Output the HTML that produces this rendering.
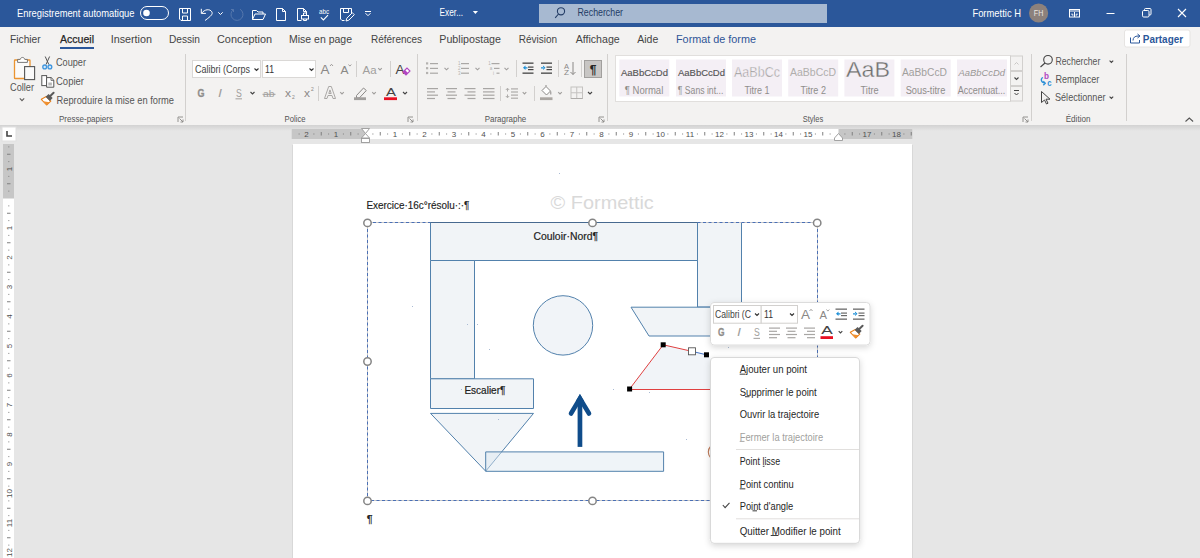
<!DOCTYPE html>
<html><head><meta charset="utf-8"><title>Word</title>
<style>
*{margin:0;padding:0}
html,body{width:1200px;height:558px;overflow:hidden;background:#e6e6e6}
svg{display:block;font-family:"Liberation Sans", sans-serif}
</style></head><body>
<svg width="1200" height="558" viewBox="0 0 1200 558">
<defs>
<linearGradient id="sh" x1="0" y1="0" x2="0" y2="1"><stop offset="0" stop-color="#d2d2d2"/><stop offset="1" stop-color="#e6e6e6"/></linearGradient>
<filter id="ds" x="-15%" y="-15%" width="130%" height="140%"><feDropShadow dx="0" dy="2" stdDeviation="3" flood-color="#000" flood-opacity="0.16"/></filter>
</defs>
<rect x="0" y="0" width="1200" height="558" fill="#e6e6e6"/><rect x="0" y="0" width="1200" height="27" fill="#2b579a"/><rect x="0" y="27" width="1200" height="98" fill="#f3f2f1"/><rect x="0" y="125" width="1200" height="6" fill="url(#sh)"/><text x="17" y="16.6" font-size="10.3" fill="#ffffff" text-anchor="start" font-weight="normal" font-style="normal" textLength="117.5" lengthAdjust="spacingAndGlyphs">Enregistrement automatique</text><rect x="140.5" y="6.5" width="28" height="13" rx="6.5" fill="none" stroke="#fff" stroke-width="1"/><circle cx="146.5" cy="13" r="3.3" fill="#fff"/><g fill="none" stroke="#fff" stroke-width="1"><path d="M179.5 8.5h11v12h-9.5l-1.5-1.5z"/><path d="M182.5 8.5v4.5h5v-4.5"/><path d="M182.5 20.5v-4.5h5v4.5"/></g><g fill="none" stroke="#fff" stroke-width="1"><path d="M201.3 8.8v4.6h4.6"/><path d="M201.6 13.2C204.5 9.2,210 8.6,211.8 11.8C213 14,211.5 15.8,205 20.5"/></g><path d="M218.3 12.3l2.2 2.2l2.2-2.2" fill="none" stroke="#fff" stroke-width="1"/><path d="M233.5 9.5A6 6 0 1 0 240 9.2 M233.5 9.5h-2.5 M233.5 9.5v2.5" fill="none" stroke="#5577ad" stroke-width="1"/><g fill="none" stroke="#fff" stroke-width="1"><path d="M252.5 19.5v-9h4l1.5 1.5h5v2"/><path d="M252.5 19.5l2.5-5.5h10.5l-2.5 5.5z"/></g><path d="M276.5 8.5h6l3 3v9h-9z M282.5 8.5v3h3" fill="none" stroke="#fff" stroke-width="1"/><g fill="none" stroke="#fff" stroke-width="1"><path d="M297.5 20.5v-12h6l3 3v1.5"/><path d="M303.5 8.5v3h3"/><path d="M301.5 20.5h-4"/><rect x="301.5" y="15.5" width="7" height="3.5"/><path d="M303.5 15.5v-2.5h3v2.5 M303.5 19v1.5h3v-1.5"/></g><text x="324.1" y="13.8" font-size="7" fill="#ffffff" text-anchor="middle" font-weight="normal" font-style="normal" textLength="10" lengthAdjust="spacingAndGlyphs">abc</text><path d="M320.8 17.3l2.6 2.6l4.6-4.8" fill="none" stroke="#fff" stroke-width="1.1"/><g fill="none" stroke="#fff" stroke-width="1"><path d="M344.5 20.5h-2.5l-1.5-1.5v-10.5h11v5"/><path d="M343.5 8.5v4h5v-4"/><path d="M346 21l0.8-2.8l5.5-5.5l2 2l-5.5 5.5z"/></g><path d="M365 11.5h6" stroke="#fff" stroke-width="1"/><path d="M365.5 13.2l2.5 2.5l2.5-2.5" fill="none" stroke="#fff" stroke-width="1"/><text x="439.6" y="15.8" font-size="10" fill="#ffffff" text-anchor="start" font-weight="normal" font-style="normal" textLength="23.5" lengthAdjust="spacingAndGlyphs">Exer...</text><path d="M472.8 11h5.2l-2.6 3z" fill="#fff"/><rect x="539" y="4" width="288" height="19" fill="#a7b9d1"/><g fill="none" stroke="#243d66" stroke-width="1.1"><circle cx="561" cy="11.3" r="3.6"/><path d="M558.5 14l-3.3 3.8"/></g><text x="577.5" y="16.4" font-size="10" fill="#233c66" text-anchor="start" font-weight="normal" font-style="normal" textLength="45.5" lengthAdjust="spacingAndGlyphs">Rechercher</text><text x="972.4" y="17" font-size="10.2" fill="#ffffff" text-anchor="start" font-weight="normal" font-style="normal" textLength="48.6" lengthAdjust="spacingAndGlyphs">Formettic H</text><circle cx="1038.6" cy="13" r="9.6" fill="#8c817c"/><text x="1038.6" y="16.3" font-size="8.5" fill="#ebe6e3" text-anchor="middle" font-weight="normal" font-style="normal" textLength="9.5" lengthAdjust="spacingAndGlyphs">FH</text><g fill="none" stroke="#fff" stroke-width="1"><rect x="1069.5" y="9.5" width="10" height="7.5"/><path d="M1069.5 11h10"/><path d="M1074.5 12v5 M1072 13.5v1.5h1.5 M1077 13.5v1.5h-1.5"/></g><path d="M1106.5 13.5h8" stroke="#fff" stroke-width="1"/><g fill="none" stroke="#fff" stroke-width="1"><rect x="1142.5" y="10.5" width="6.5" height="6.5" rx="1.2"/><path d="M1144.5 10.5v-1a1 1 0 0 1 1-1h4.5a1 1 0 0 1 1 1v4.5a1 1 0 0 1 -1 1h-1"/></g><path d="M1178 9l8 8 M1186 9l-8 8" stroke="#fff" stroke-width="1.1"/><text x="10" y="42.6" font-size="11" fill="#444444" text-anchor="start" font-weight="normal" font-style="normal" textLength="30.7" lengthAdjust="spacingAndGlyphs">Fichier</text><text x="60" y="42.6" font-size="11" fill="#262626" text-anchor="start" font-weight="normal" font-style="normal" textLength="34" lengthAdjust="spacingAndGlyphs" stroke="#262626" stroke-width="0.25">Accueil</text><text x="110.7" y="42.6" font-size="11" fill="#444444" text-anchor="start" font-weight="normal" font-style="normal" textLength="41.3" lengthAdjust="spacingAndGlyphs">Insertion</text><text x="169" y="42.6" font-size="11" fill="#444444" text-anchor="start" font-weight="normal" font-style="normal" textLength="31" lengthAdjust="spacingAndGlyphs">Dessin</text><text x="217" y="42.6" font-size="11" fill="#444444" text-anchor="start" font-weight="normal" font-style="normal" textLength="55" lengthAdjust="spacingAndGlyphs">Conception</text><text x="289" y="42.6" font-size="11" fill="#444444" text-anchor="start" font-weight="normal" font-style="normal" textLength="63" lengthAdjust="spacingAndGlyphs">Mise en page</text><text x="371" y="42.6" font-size="11" fill="#444444" text-anchor="start" font-weight="normal" font-style="normal" textLength="51" lengthAdjust="spacingAndGlyphs">Références</text><text x="439.3" y="42.6" font-size="11" fill="#444444" text-anchor="start" font-weight="normal" font-style="normal" textLength="61.7" lengthAdjust="spacingAndGlyphs">Publipostage</text><text x="518.7" y="42.6" font-size="11" fill="#444444" text-anchor="start" font-weight="normal" font-style="normal" textLength="38.3" lengthAdjust="spacingAndGlyphs">Révision</text><text x="575.7" y="42.6" font-size="11" fill="#444444" text-anchor="start" font-weight="normal" font-style="normal" textLength="44" lengthAdjust="spacingAndGlyphs">Affichage</text><text x="637.3" y="42.6" font-size="11" fill="#444444" text-anchor="start" font-weight="normal" font-style="normal" textLength="21" lengthAdjust="spacingAndGlyphs">Aide</text><text x="676" y="42.6" font-size="11" fill="#2f5597" text-anchor="start" font-weight="normal" font-style="normal" textLength="80" lengthAdjust="spacingAndGlyphs">Format de forme</text><rect x="60" y="47" width="34" height="2" fill="#2b579a"/><rect x="1124.5" y="30" width="65.5" height="17" rx="2" fill="#fff" stroke="#e6e4e2" stroke-width="1"/><g fill="none" stroke="#2b579a" stroke-width="1"><path d="M1130.5 37.5v5.5h9v-3"/><path d="M1133 40.5c0-3 2-4.5 5-4.5h1.5 M1137.5 34l2.5 2l-2.5 2"/></g><text x="1142.8" y="42.8" font-size="11" fill="#2b579a" text-anchor="start" font-weight="bold" font-style="normal" textLength="40.3" lengthAdjust="spacingAndGlyphs">Partager</text><g><rect x="14.5" y="60" width="15.5" height="18.5" rx="0.6" fill="#fbfaf9" stroke="#eb9430" stroke-width="1.3"/><path d="M17.6 62.4v-3h2.6c0.6-2.6 4-2.6 4.6 0h2.6v3z" fill="#fff" stroke="#6a6a6a" stroke-width="0.9"/><rect x="24.6" y="66.6" width="10" height="13" fill="#fafafa" stroke="#555" stroke-width="1.1"/></g><text x="10" y="91" font-size="10.5" fill="#555555" text-anchor="start" font-weight="normal" font-style="normal" textLength="24" lengthAdjust="spacingAndGlyphs">Coller</text><path d="M19.8 98.4l2.2 2.2l2.2 -2.2" fill="none" stroke="#605e5c" stroke-width="1.1"/><path d="M45.2 56.5L48.8 64.5 M49.6 56.5L46 64.5" fill="none" stroke="#555" stroke-width="1"/><circle cx="44.7" cy="66.9" r="1.9" fill="#d4e8f8" stroke="#3f95dd" stroke-width="1.3"/><circle cx="49.9" cy="66.9" r="1.9" fill="#d4e8f8" stroke="#3f95dd" stroke-width="1.3"/><text x="56" y="66.3" font-size="10.3" fill="#555555" text-anchor="start" font-weight="normal" font-style="normal" textLength="30" lengthAdjust="spacingAndGlyphs">Couper</text><rect x="41.8" y="75.6" width="4.8" height="10" fill="#fff" stroke="#555" stroke-width="1"/><path d="M46.6 77.6h4.6l2.6 2.6v7h-7.2z" fill="#fff" stroke="#555" stroke-width="1"/><path d="M51 77.6v2.8h2.8" fill="none" stroke="#555" stroke-width="0.8"/><rect x="48.3" y="82.5" width="3.6" height="3" fill="#b8b8b8"/><text x="56" y="85" font-size="10.3" fill="#555555" text-anchor="start" font-weight="normal" font-style="normal" textLength="28" lengthAdjust="spacingAndGlyphs">Copier</text><g transform="translate(0 0)"><path d="M41.3 99.3L46.3 96.6L50.8 101.1L46.6 105Z" fill="#fff" stroke="#e8801a" stroke-width="1.1" stroke-linejoin="round"/><path d="M43.2 101.2L49.6 102.2L46.6 105Z" fill="#f09030"/><path d="M45.6 96.8L48.6 94L52.6 98L49.8 101Z" fill="#5a5a5a"/><path d="M50 96.2L53.6 92.8" stroke="#5a5a5a" stroke-width="2" stroke-linecap="round"/></g><text x="56.5" y="104" font-size="10.3" fill="#555555" text-anchor="start" font-weight="normal" font-style="normal" textLength="117.5" lengthAdjust="spacingAndGlyphs">Reproduire la mise en forme</text><text x="59" y="122" font-size="9.4" fill="#555555" text-anchor="start" font-weight="normal" font-style="normal" textLength="54" lengthAdjust="spacingAndGlyphs">Presse-papiers</text><g fill="none" stroke="#8a8886" stroke-width="0.9"><path d="M178 122v-5h5"/><path d="M179.5 118.5l3.5 3.5 M183 119.5v2.5h-2.5"/></g><rect x="185" y="54" width="1" height="67" fill="#d2d0ce"/><rect x="192.5" y="60.5" width="68" height="17" fill="#fff" stroke="#dad8d6"/><rect x="262.5" y="60.5" width="53" height="17" fill="#fff" stroke="#dad8d6"/><text x="195" y="72.5" font-size="10.3" fill="#444" text-anchor="start" font-weight="normal" font-style="normal" textLength="55" lengthAdjust="spacingAndGlyphs">Calibri (Corps</text><path d="M254.5 68.5l2 2l2 -2" fill="none" stroke="#333" stroke-width="1.1"/><text x="265" y="72.5" font-size="10.3" fill="#333" text-anchor="start" font-weight="normal" font-style="normal" textLength="9" lengthAdjust="spacingAndGlyphs">11</text><path d="M309.5 68.5l2 2l2 -2" fill="none" stroke="#333" stroke-width="1.1"/><text x="320.5" y="74" font-size="13" fill="#8a8886" text-anchor="start" font-weight="normal" font-style="normal" textLength="9" lengthAdjust="spacingAndGlyphs">A</text><path d="M330 66l1.5-1.7l1.5 1.7" fill="none" stroke="#8a8886" stroke-width="0.8"/><text x="340.5" y="74" font-size="11" fill="#8a8886" text-anchor="start" font-weight="normal" font-style="normal" textLength="8" lengthAdjust="spacingAndGlyphs">A</text><path d="M348.5 64.5l1.4 1.6l1.4-1.6" fill="none" stroke="#8a8886" stroke-width="0.8"/><rect x="356" y="61" width="1" height="16" fill="#d2d0ce"/><text x="362.5" y="73.5" font-size="10.5" fill="#a19f9d" text-anchor="start" font-weight="normal" font-style="normal" textLength="14" lengthAdjust="spacingAndGlyphs">Aa</text><path d="M378.2 68.1l1.8 1.8l1.8 -1.8" fill="none" stroke="#a19f9d" stroke-width="1.1"/><rect x="390" y="61" width="1" height="16" fill="#d2d0ce"/><text x="395.5" y="74" font-size="13" fill="#444" text-anchor="start" font-weight="normal" font-style="normal" textLength="9" lengthAdjust="spacingAndGlyphs">A</text><path d="M403 72l4-4l3 3l-4 4z" fill="#fff" stroke="#b146c2" stroke-width="1.1"/><path d="M403 72l2-2l3 3l-2 2z" fill="#b146c2"/><text x="197.5" y="96.5" font-size="10.5" fill="#8f8d8b" text-anchor="start" font-weight="bold" font-style="normal" textLength="7" lengthAdjust="spacingAndGlyphs" stroke="#8f8d8b" stroke-width="0.3">G</text><text x="218" y="97" font-size="10.5" fill="#a19f9d" text-anchor="start" font-weight="normal" font-style="italic" textLength="4" lengthAdjust="spacingAndGlyphs">I</text><text x="236" y="96.5" font-size="10" fill="#a19f9d" text-anchor="start" font-weight="normal" font-style="normal" textLength="5.8" lengthAdjust="spacingAndGlyphs">S</text><rect x="235.5" y="98.2" width="6.5" height="1.2" fill="#aeacaa"/><path d="M250.5 92.0l2 2l2 -2" fill="none" stroke="#444" stroke-width="1.1"/><text x="263" y="96.5" font-size="9.5" fill="#a19f9d" text-anchor="start" font-weight="normal" font-style="normal" textLength="11.5" lengthAdjust="spacingAndGlyphs">ab</text><rect x="262.5" y="93.8" width="13" height="1" fill="#a19f9d"/><text x="285" y="97" font-size="10" fill="#8a8886" text-anchor="start" font-weight="normal" font-style="normal" textLength="6" lengthAdjust="spacingAndGlyphs">x</text><text x="292" y="99" font-size="5" fill="#8a8886" text-anchor="start" font-weight="normal" font-style="normal">2</text><text x="304" y="97" font-size="10" fill="#8a8886" text-anchor="start" font-weight="normal" font-style="normal" textLength="6" lengthAdjust="spacingAndGlyphs">x</text><text x="311" y="90.5" font-size="5" fill="#8a8886" text-anchor="start" font-weight="normal" font-style="normal">2</text><rect x="318" y="86" width="1" height="15" fill="#d2d0ce"/><path d="M324.5 98.5L328.7 86.5h2.6L335.5 98.5h-2.5l-1-3h-4l-1 3z M328.8 93.5h2.4l-1.2-3.6z" fill="none" stroke="#a19f9d" stroke-width="0.9" stroke-linejoin="round"/><path d="M340.2 92.1l1.8 1.8l1.8 -1.8" fill="none" stroke="#a19f9d" stroke-width="1.1"/><path d="M356.5 95.5l7-7.5l2.8 2.5l-7 7.5h-2.8z" fill="none" stroke="#8a8886" stroke-width="1"/><rect x="354" y="97.3" width="12" height="2.8" fill="#a19f9d"/><path d="M372.2 92.1l1.8 1.8l1.8 -1.8" fill="none" stroke="#a19f9d" stroke-width="1.1"/><text x="386" y="95.8" font-size="11.5" fill="#444" text-anchor="start" font-weight="normal" font-style="normal" textLength="10" lengthAdjust="spacingAndGlyphs">A</text><rect x="384" y="97.3" width="13" height="2.8" fill="#e81123"/><path d="M403 92.0l2 2l2 -2" fill="none" stroke="#444" stroke-width="1.1"/><text x="284.6" y="122" font-size="9.4" fill="#555555" text-anchor="start" font-weight="normal" font-style="normal" textLength="21" lengthAdjust="spacingAndGlyphs">Police</text><g fill="none" stroke="#8a8886" stroke-width="0.9"><path d="M408 122v-5h5"/><path d="M409.5 118.5l3.5 3.5 M413 119.5v2.5h-2.5"/></g><rect x="417" y="54" width="1" height="67" fill="#d2d0ce"/><rect x="426" y="62.3" width="2.2" height="2.2" fill="#b4b2b0"/><rect x="426" y="67.1" width="2.2" height="2.2" fill="#b4b2b0"/><rect x="426" y="71.89999999999999" width="2.2" height="2.2" fill="#b4b2b0"/><rect x="430" y="63.0" width="8" height="1.2" fill="#aaa8a6"/><rect x="430" y="67.8" width="8" height="1.2" fill="#aaa8a6"/><rect x="430" y="72.6" width="8" height="1.2" fill="#aaa8a6"/><path d="M444.5 67.8l2 2l2 -2" fill="none" stroke="#a19f9d" stroke-width="1.1"/><text x="458" y="65.0" font-size="4.5" fill="#b4b2b0" text-anchor="start" font-weight="normal" font-style="normal">1</text><text x="458" y="69.8" font-size="4.5" fill="#b4b2b0" text-anchor="start" font-weight="normal" font-style="normal">2</text><text x="458" y="74.6" font-size="4.5" fill="#b4b2b0" text-anchor="start" font-weight="normal" font-style="normal">3</text><rect x="461" y="63.0" width="8" height="1.2" fill="#aaa8a6"/><rect x="461" y="67.8" width="8" height="1.2" fill="#aaa8a6"/><rect x="461" y="72.6" width="8" height="1.2" fill="#aaa8a6"/><path d="M475.5 67.8l2 2l2 -2" fill="none" stroke="#a19f9d" stroke-width="1.1"/><rect x="491.5" y="63.0" width="8" height="1.2" fill="#aaa8a6"/><rect x="494.0" y="67.8" width="5.5" height="1.2" fill="#aaa8a6"/><rect x="496.5" y="72.6" width="3" height="1.2" fill="#aaa8a6"/><text x="488.3" y="65" font-size="4.5" fill="#b4b2b0" text-anchor="start" font-weight="normal" font-style="normal">1</text><text x="489.8" y="69.8" font-size="4.5" fill="#b4b2b0" text-anchor="start" font-weight="normal" font-style="normal">a</text><text x="493" y="74.6" font-size="4.5" fill="#b4b2b0" text-anchor="start" font-weight="normal" font-style="normal">i</text><path d="M504.5 67.8l2 2l2 -2" fill="none" stroke="#a19f9d" stroke-width="1.1"/><rect x="516" y="60" width="1" height="17" fill="#d2d0ce"/><rect x="522.5" y="62.5" width="11" height="1.3" fill="#444"/><rect x="528" y="66.5" width="5.5" height="1.2" fill="#444"/><rect x="528" y="69" width="5.5" height="1.2" fill="#444"/><rect x="522.5" y="72.5" width="11" height="1.3" fill="#444"/><path d="M523 67.8l2.5-2.2v4.4z M525 67.2h2.5v1.2h-2.5z" fill="#1e90d8"/><rect x="541" y="62.5" width="11" height="1.3" fill="#444"/><rect x="546.5" y="66.5" width="5.5" height="1.2" fill="#444"/><rect x="546.5" y="69" width="5.5" height="1.2" fill="#444"/><rect x="541" y="72.5" width="11" height="1.3" fill="#444"/><path d="M545.5 67.8l-2.5-2.2v4.4z M541 67.2h2.5v1.2h-2.5z" fill="#1e90d8"/><rect x="558" y="60" width="1" height="17" fill="#d2d0ce"/><text x="564" y="68.5" font-size="6.5" fill="#8a8886" text-anchor="start" font-weight="normal" font-style="normal" textLength="5" lengthAdjust="spacingAndGlyphs">A</text><text x="564" y="75" font-size="6.5" fill="#8a8886" text-anchor="start" font-weight="normal" font-style="normal" textLength="5" lengthAdjust="spacingAndGlyphs">Z</text><path d="M573 62v12.5 M570.5 72l2.5 2.5l2.5-2.5" fill="none" stroke="#8a8886" stroke-width="1"/><rect x="581" y="60" width="1" height="17" fill="#d2d0ce"/><rect x="584.5" y="60.5" width="17" height="17" fill="#c8c6c4" stroke="#a19f9d"/><text x="593" y="73.5" font-size="12" fill="#262626" text-anchor="middle" font-weight="bold" font-style="normal">¶</text><rect x="427" y="88.0" width="11" height="1.2" fill="#a8a6a4"/><rect x="427" y="91.3" width="8" height="1.2" fill="#a8a6a4"/><rect x="427" y="94.6" width="11" height="1.2" fill="#a8a6a4"/><rect x="427" y="97.9" width="8" height="1.2" fill="#a8a6a4"/><rect x="446" y="88.0" width="11" height="1.2" fill="#a8a6a4"/><rect x="447.5" y="91.3" width="8" height="1.2" fill="#a8a6a4"/><rect x="446" y="94.6" width="11" height="1.2" fill="#a8a6a4"/><rect x="447.5" y="97.9" width="8" height="1.2" fill="#a8a6a4"/><rect x="464.5" y="88.0" width="11" height="1.2" fill="#a8a6a4"/><rect x="467.5" y="91.3" width="8" height="1.2" fill="#a8a6a4"/><rect x="464.5" y="94.6" width="11" height="1.2" fill="#a8a6a4"/><rect x="467.5" y="97.9" width="8" height="1.2" fill="#a8a6a4"/><rect x="483" y="88.0" width="11.5" height="1.2" fill="#a8a6a4"/><rect x="483" y="91.3" width="11.5" height="1.2" fill="#a8a6a4"/><rect x="483" y="94.6" width="11.5" height="1.2" fill="#a8a6a4"/><rect x="483" y="97.9" width="11.5" height="1.2" fill="#a8a6a4"/><rect x="500" y="86" width="1" height="15" fill="#d2d0ce"/><rect x="511" y="88.3" width="7" height="1.2" fill="#aeacaa"/><rect x="511" y="91.39999999999999" width="7" height="1.2" fill="#aeacaa"/><rect x="511" y="94.5" width="7" height="1.2" fill="#aeacaa"/><rect x="511" y="97.6" width="7" height="1.2" fill="#aeacaa"/><path d="M507.5 88.5v3 M507.5 94.5v3 M505.8 90l1.7-1.8l1.7 1.8 M505.8 96l1.7 1.8l1.7-1.8" fill="none" stroke="#aeacaa" stroke-width="1"/><path d="M522.7 92.1l1.8 1.8l1.8 -1.8" fill="none" stroke="#a19f9d" stroke-width="1.1"/><rect x="534" y="86" width="1" height="15" fill="#d2d0ce"/><path d="M542 90.5l4-4l4.5 4.5l-4 4z" fill="#fff" stroke="#8a8886" stroke-width="1" stroke-linejoin="round"/><path d="M546 86.5v-1.5 M550.8 91.5v3" fill="none" stroke="#8a8886" stroke-width="1"/><rect x="540" y="97.3" width="12.5" height="2.8" fill="#aaa6a2"/><path d="M558.2 92.1l1.8 1.8l1.8 -1.8" fill="none" stroke="#a19f9d" stroke-width="1.1"/><g fill="none" stroke="#c4c2c0" stroke-width="1"><rect x="571" y="87" width="11.5" height="11.5"/><path d="M576.75 87v11.5 M571 92.75h11.5"/></g><path d="M571 98.5h11.5" stroke="#aeacaa" stroke-width="1"/><path d="M588 92.0l2 2l2 -2" fill="none" stroke="#444" stroke-width="1.1"/><text x="484.7" y="122" font-size="9.4" fill="#555555" text-anchor="start" font-weight="normal" font-style="normal" textLength="41.6" lengthAdjust="spacingAndGlyphs">Paragraphe</text><g fill="none" stroke="#8a8886" stroke-width="0.9"><path d="M599 122v-5h5"/><path d="M600.5 118.5l3.5 3.5 M604 119.5v2.5h-2.5"/></g><rect x="607" y="54" width="1" height="67" fill="#d2d0ce"/><rect x="615.5" y="55.5" width="395" height="46" fill="#fff" stroke="#e1dfdd"/><rect x="619.3" y="59.5" width="50" height="37" fill="#f4eff5"/><rect x="676" y="59.5" width="50" height="37" fill="#f4eff5"/><rect x="732" y="59.5" width="50" height="37" fill="#f4eff5"/><rect x="788.2" y="59.5" width="50" height="37" fill="#f4eff5"/><rect x="844.4" y="59.5" width="50" height="37" fill="#f4eff5"/><rect x="900.7" y="59.5" width="50" height="37" fill="#f4eff5"/><rect x="957" y="59.5" width="50" height="37" fill="#f4eff5"/><text x="621" y="75.5" font-size="9.8" fill="#555" text-anchor="start" font-weight="normal" font-style="normal" textLength="47" lengthAdjust="spacingAndGlyphs" stroke="#555" stroke-width="0.15">AaBbCcDd</text><text x="624.8" y="94.3" font-size="10" fill="#8f8d8b" text-anchor="start" font-weight="normal" font-style="normal" textLength="38.5" lengthAdjust="spacingAndGlyphs">¶ Normal</text><text x="678" y="75.5" font-size="9.8" fill="#555" text-anchor="start" font-weight="normal" font-style="normal" textLength="47" lengthAdjust="spacingAndGlyphs" stroke="#555" stroke-width="0.15">AaBbCcDd</text><text x="677.8" y="94.3" font-size="10" fill="#8f8d8b" text-anchor="start" font-weight="normal" font-style="normal" textLength="45.5" lengthAdjust="spacingAndGlyphs">¶ Sans int...</text><text x="734" y="77" font-size="14" fill="#8f8d8b" text-anchor="start" font-weight="normal" font-style="normal" textLength="46" lengthAdjust="spacingAndGlyphs" stroke="#f4eff5" stroke-width="0.5">AaBbCc</text><text x="744.4" y="94.3" font-size="10" fill="#8f8d8b" text-anchor="start" font-weight="normal" font-style="normal" textLength="25.2" lengthAdjust="spacingAndGlyphs">Titre 1</text><text x="790" y="76" font-size="11.5" fill="#b0aeac" text-anchor="start" font-weight="normal" font-style="normal" textLength="46" lengthAdjust="spacingAndGlyphs">AaBbCcD</text><text x="800.6" y="94.3" font-size="10" fill="#8f8d8b" text-anchor="start" font-weight="normal" font-style="normal" textLength="25.4" lengthAdjust="spacingAndGlyphs">Titre 2</text><text x="846" y="77" font-size="22" fill="#6f6f6f" text-anchor="start" font-weight="normal" font-style="normal" textLength="44" lengthAdjust="spacingAndGlyphs" stroke="#f4eff5" stroke-width="0.35">AaB</text><text x="860.6" y="94.3" font-size="10" fill="#8f8d8b" text-anchor="start" font-weight="normal" font-style="normal" textLength="18" lengthAdjust="spacingAndGlyphs">Titre</text><text x="902" y="75.5" font-size="10" fill="#a19f9d" text-anchor="start" font-weight="normal" font-style="normal" textLength="45" lengthAdjust="spacingAndGlyphs">AaBbCcD</text><text x="905.7" y="94.3" font-size="10" fill="#8f8d8b" text-anchor="start" font-weight="normal" font-style="normal" textLength="39.6" lengthAdjust="spacingAndGlyphs">Sous-titre</text><text x="958.5" y="75.5" font-size="9.5" fill="#9a9896" text-anchor="start" font-weight="normal" font-style="italic" textLength="46.5" lengthAdjust="spacingAndGlyphs">AaBbCcDd</text><text x="957.7" y="94.3" font-size="10" fill="#8f8d8b" text-anchor="start" font-weight="normal" font-style="normal" textLength="47.7" lengthAdjust="spacingAndGlyphs">Accentuat...</text><rect x="1010.5" y="56" width="12" height="14.5" fill="#f3f2f1" stroke="#d2d0ce"/><rect x="1010.5" y="71.5" width="12" height="14" fill="#f3f2f1" stroke="#d2d0ce"/><rect x="1010.5" y="86.5" width="12" height="14.5" fill="#f3f2f1" stroke="#d2d0ce"/><path d="M1014.5 64.5l2-2l2 2" fill="none" stroke="#c8c6c4" stroke-width="1"/><path d="M1014.5 77.5l2 2l2-2" fill="none" stroke="#444" stroke-width="1.1"/><path d="M1014 90.5h5 M1014.5 93l2 2l2-2" fill="none" stroke="#444" stroke-width="1"/><text x="802.7" y="122" font-size="9.4" fill="#555555" text-anchor="start" font-weight="normal" font-style="normal" textLength="20.5" lengthAdjust="spacingAndGlyphs">Styles</text><g fill="none" stroke="#8a8886" stroke-width="0.9"><path d="M1023 122v-5h5"/><path d="M1024.5 118.5l3.5 3.5 M1028 119.5v2.5h-2.5"/></g><rect x="1031" y="54" width="1" height="67" fill="#d2d0ce"/><g fill="none" stroke="#444" stroke-width="1.1"><circle cx="1048" cy="59.8" r="4.3"/><path d="M1045 63l-4.5 4"/></g><text x="1055.5" y="65" font-size="10.3" fill="#555555" text-anchor="start" font-weight="normal" font-style="normal" textLength="44.8" lengthAdjust="spacingAndGlyphs">Rechercher</text><path d="M1109.6000000000001 60.6l1.8 1.8l1.8 -1.8" fill="none" stroke="#444" stroke-width="1.1"/><text x="1044" y="79.2" font-size="8.5" fill="#b146c2" text-anchor="start" font-weight="bold" font-style="normal" textLength="5" lengthAdjust="spacingAndGlyphs">b</text><text x="1047.3" y="85.6" font-size="8.5" fill="#2b8fd6" text-anchor="start" font-weight="bold" font-style="normal" textLength="4.3" lengthAdjust="spacingAndGlyphs">c</text><path d="M1043 77.5 C1040.5 78.5,1040.5 82.5,1045 83.2 M1043.3 81.2l2 2l-2 2" fill="none" stroke="#2b8fd6" stroke-width="1.3"/><text x="1055.5" y="83" font-size="10.3" fill="#555555" text-anchor="start" font-weight="normal" font-style="normal" textLength="43.7" lengthAdjust="spacingAndGlyphs">Remplacer</text><path d="M1041.5 91.5v11l3-2.5l2 4l1.5-0.8l-2-4h4z" fill="none" stroke="#444" stroke-width="1"/><text x="1055" y="101" font-size="10.3" fill="#555555" text-anchor="start" font-weight="normal" font-style="normal" textLength="50.5" lengthAdjust="spacingAndGlyphs">Sélectionner</text><path d="M1109.6000000000001 96.6l1.8 1.8l1.8 -1.8" fill="none" stroke="#444" stroke-width="1.1"/><text x="1065.7" y="122" font-size="9.4" fill="#555555" text-anchor="start" font-weight="normal" font-style="normal" textLength="24.8" lengthAdjust="spacingAndGlyphs">Édition</text><rect x="1126" y="54" width="1" height="67" fill="#d2d0ce"/><path d="M1185.5 121.5l3.8-3.5l3.8 3.5" fill="none" stroke="#555" stroke-width="1.1"/><rect x="2" y="127" width="14" height="14" fill="#fff" stroke="#e0e0e0" stroke-width="1"/><path d="M7 131v5h5" fill="none" stroke="#444" stroke-width="1.6"/><rect x="291.5" y="129" width="621" height="10" fill="#fff"/><rect x="291.5" y="129" width="74" height="10" fill="#c6c6c6"/><rect x="838.5" y="129" width="74" height="10" fill="#c6c6c6"/><rect x="298.62" y="133.5" width="1" height="1" fill="#808080"/><text x="306.5" y="137.2" font-size="8" fill="#505050" text-anchor="middle" font-weight="normal" font-style="normal">2</text><rect x="313.38" y="133.5" width="1" height="1" fill="#808080"/><rect x="320.75" y="132" width="1" height="3.5" fill="#808080"/><rect x="328.12" y="133.5" width="1" height="1" fill="#808080"/><text x="336.0" y="137.2" font-size="8" fill="#505050" text-anchor="middle" font-weight="normal" font-style="normal">1</text><rect x="342.88" y="133.5" width="1" height="1" fill="#808080"/><rect x="350.25" y="132" width="1" height="3.5" fill="#808080"/><rect x="357.62" y="133.5" width="1" height="1" fill="#808080"/><rect x="372.38" y="133.5" width="1" height="1" fill="#808080"/><rect x="379.75" y="132" width="1" height="3.5" fill="#808080"/><rect x="387.12" y="133.5" width="1" height="1" fill="#808080"/><text x="395.0" y="137.2" font-size="8" fill="#505050" text-anchor="middle" font-weight="normal" font-style="normal">1</text><rect x="401.88" y="133.5" width="1" height="1" fill="#808080"/><rect x="409.25" y="132" width="1" height="3.5" fill="#808080"/><rect x="416.62" y="133.5" width="1" height="1" fill="#808080"/><text x="424.5" y="137.2" font-size="8" fill="#505050" text-anchor="middle" font-weight="normal" font-style="normal">2</text><rect x="431.38" y="133.5" width="1" height="1" fill="#808080"/><rect x="438.75" y="132" width="1" height="3.5" fill="#808080"/><rect x="446.12" y="133.5" width="1" height="1" fill="#808080"/><text x="454.0" y="137.2" font-size="8" fill="#505050" text-anchor="middle" font-weight="normal" font-style="normal">3</text><rect x="460.88" y="133.5" width="1" height="1" fill="#808080"/><rect x="468.25" y="132" width="1" height="3.5" fill="#808080"/><rect x="475.62" y="133.5" width="1" height="1" fill="#808080"/><text x="483.5" y="137.2" font-size="8" fill="#505050" text-anchor="middle" font-weight="normal" font-style="normal">4</text><rect x="490.38" y="133.5" width="1" height="1" fill="#808080"/><rect x="497.75" y="132" width="1" height="3.5" fill="#808080"/><rect x="505.12" y="133.5" width="1" height="1" fill="#808080"/><text x="513.0" y="137.2" font-size="8" fill="#505050" text-anchor="middle" font-weight="normal" font-style="normal">5</text><rect x="519.88" y="133.5" width="1" height="1" fill="#808080"/><rect x="527.25" y="132" width="1" height="3.5" fill="#808080"/><rect x="534.62" y="133.5" width="1" height="1" fill="#808080"/><text x="542.5" y="137.2" font-size="8" fill="#505050" text-anchor="middle" font-weight="normal" font-style="normal">6</text><rect x="549.38" y="133.5" width="1" height="1" fill="#808080"/><rect x="556.75" y="132" width="1" height="3.5" fill="#808080"/><rect x="564.12" y="133.5" width="1" height="1" fill="#808080"/><text x="572.0" y="137.2" font-size="8" fill="#505050" text-anchor="middle" font-weight="normal" font-style="normal">7</text><rect x="578.88" y="133.5" width="1" height="1" fill="#808080"/><rect x="586.25" y="132" width="1" height="3.5" fill="#808080"/><rect x="593.62" y="133.5" width="1" height="1" fill="#808080"/><text x="601.5" y="137.2" font-size="8" fill="#505050" text-anchor="middle" font-weight="normal" font-style="normal">8</text><rect x="608.38" y="133.5" width="1" height="1" fill="#808080"/><rect x="615.75" y="132" width="1" height="3.5" fill="#808080"/><rect x="623.12" y="133.5" width="1" height="1" fill="#808080"/><text x="631.0" y="137.2" font-size="8" fill="#505050" text-anchor="middle" font-weight="normal" font-style="normal">9</text><rect x="637.88" y="133.5" width="1" height="1" fill="#808080"/><rect x="645.25" y="132" width="1" height="3.5" fill="#808080"/><rect x="652.62" y="133.5" width="1" height="1" fill="#808080"/><text x="660.5" y="137.2" font-size="8" fill="#505050" text-anchor="middle" font-weight="normal" font-style="normal">10</text><rect x="667.38" y="133.5" width="1" height="1" fill="#808080"/><rect x="674.75" y="132" width="1" height="3.5" fill="#808080"/><rect x="682.12" y="133.5" width="1" height="1" fill="#808080"/><text x="690.0" y="137.2" font-size="8" fill="#505050" text-anchor="middle" font-weight="normal" font-style="normal">11</text><rect x="696.88" y="133.5" width="1" height="1" fill="#808080"/><rect x="704.25" y="132" width="1" height="3.5" fill="#808080"/><rect x="711.62" y="133.5" width="1" height="1" fill="#808080"/><text x="719.5" y="137.2" font-size="8" fill="#505050" text-anchor="middle" font-weight="normal" font-style="normal">12</text><rect x="726.38" y="133.5" width="1" height="1" fill="#808080"/><rect x="733.75" y="132" width="1" height="3.5" fill="#808080"/><rect x="741.12" y="133.5" width="1" height="1" fill="#808080"/><text x="749.0" y="137.2" font-size="8" fill="#505050" text-anchor="middle" font-weight="normal" font-style="normal">13</text><rect x="755.88" y="133.5" width="1" height="1" fill="#808080"/><rect x="763.25" y="132" width="1" height="3.5" fill="#808080"/><rect x="770.62" y="133.5" width="1" height="1" fill="#808080"/><text x="778.5" y="137.2" font-size="8" fill="#505050" text-anchor="middle" font-weight="normal" font-style="normal">14</text><rect x="785.38" y="133.5" width="1" height="1" fill="#808080"/><rect x="792.75" y="132" width="1" height="3.5" fill="#808080"/><rect x="800.12" y="133.5" width="1" height="1" fill="#808080"/><text x="808.0" y="137.2" font-size="8" fill="#505050" text-anchor="middle" font-weight="normal" font-style="normal">15</text><rect x="814.88" y="133.5" width="1" height="1" fill="#808080"/><rect x="822.25" y="132" width="1" height="3.5" fill="#808080"/><rect x="829.62" y="133.5" width="1" height="1" fill="#808080"/><rect x="844.38" y="133.5" width="1" height="1" fill="#808080"/><rect x="851.75" y="132" width="1" height="3.5" fill="#808080"/><rect x="859.12" y="133.5" width="1" height="1" fill="#808080"/><text x="867.0" y="137.2" font-size="8" fill="#505050" text-anchor="middle" font-weight="normal" font-style="normal">17</text><rect x="873.88" y="133.5" width="1" height="1" fill="#808080"/><rect x="881.25" y="132" width="1" height="3.5" fill="#808080"/><rect x="888.62" y="133.5" width="1" height="1" fill="#808080"/><text x="896.5" y="137.2" font-size="8" fill="#505050" text-anchor="middle" font-weight="normal" font-style="normal">18</text><rect x="903.38" y="133.5" width="1" height="1" fill="#808080"/><rect x="910.75" y="132" width="1" height="3.5" fill="#808080"/><path d="M361.5 128.5h8l-4 5z" fill="#fff" stroke="#999" stroke-width="0.9"/><path d="M365.5 133.5l4 4.5h-8z" fill="#fff" stroke="#999" stroke-width="0.9"/><rect x="361.5" y="138.5" width="8" height="4" fill="#fff" stroke="#999" stroke-width="0.9"/><path d="M838.5 133.5l4 4.5v2.5h-8v-2.5z" fill="#fff" stroke="#999" stroke-width="0.9"/><rect x="3" y="144" width="11" height="414" fill="#fff"/><rect x="3" y="144" width="11" height="54.5" fill="#c6c6c6"/><rect x="8.3" y="146.38" width="1" height="1" fill="#808080"/><rect x="7" y="153.75" width="3.5" height="1" fill="#808080"/><rect x="8.3" y="161.12" width="1" height="1" fill="#808080"/><text x="0" y="0" font-size="8" fill="#505050" text-anchor="middle" transform="translate(11.5 169.00) rotate(-90)">1</text><rect x="8.3" y="175.88" width="1" height="1" fill="#808080"/><rect x="7" y="183.25" width="3.5" height="1" fill="#808080"/><rect x="8.3" y="190.62" width="1" height="1" fill="#808080"/><rect x="8.3" y="205.38" width="1" height="1" fill="#808080"/><rect x="7" y="212.75" width="3.5" height="1" fill="#808080"/><rect x="8.3" y="220.12" width="1" height="1" fill="#808080"/><text x="0" y="0" font-size="8" fill="#505050" text-anchor="middle" transform="translate(11.5 228.00) rotate(-90)">1</text><rect x="8.3" y="234.88" width="1" height="1" fill="#808080"/><rect x="7" y="242.25" width="3.5" height="1" fill="#808080"/><rect x="8.3" y="249.62" width="1" height="1" fill="#808080"/><text x="0" y="0" font-size="8" fill="#505050" text-anchor="middle" transform="translate(11.5 257.50) rotate(-90)">2</text><rect x="8.3" y="264.38" width="1" height="1" fill="#808080"/><rect x="7" y="271.75" width="3.5" height="1" fill="#808080"/><rect x="8.3" y="279.12" width="1" height="1" fill="#808080"/><text x="0" y="0" font-size="8" fill="#505050" text-anchor="middle" transform="translate(11.5 287.00) rotate(-90)">3</text><rect x="8.3" y="293.88" width="1" height="1" fill="#808080"/><rect x="7" y="301.25" width="3.5" height="1" fill="#808080"/><rect x="8.3" y="308.62" width="1" height="1" fill="#808080"/><text x="0" y="0" font-size="8" fill="#505050" text-anchor="middle" transform="translate(11.5 316.50) rotate(-90)">4</text><rect x="8.3" y="323.38" width="1" height="1" fill="#808080"/><rect x="7" y="330.75" width="3.5" height="1" fill="#808080"/><rect x="8.3" y="338.12" width="1" height="1" fill="#808080"/><text x="0" y="0" font-size="8" fill="#505050" text-anchor="middle" transform="translate(11.5 346.00) rotate(-90)">5</text><rect x="8.3" y="352.88" width="1" height="1" fill="#808080"/><rect x="7" y="360.25" width="3.5" height="1" fill="#808080"/><rect x="8.3" y="367.62" width="1" height="1" fill="#808080"/><text x="0" y="0" font-size="8" fill="#505050" text-anchor="middle" transform="translate(11.5 375.50) rotate(-90)">6</text><rect x="8.3" y="382.38" width="1" height="1" fill="#808080"/><rect x="7" y="389.75" width="3.5" height="1" fill="#808080"/><rect x="8.3" y="397.12" width="1" height="1" fill="#808080"/><text x="0" y="0" font-size="8" fill="#505050" text-anchor="middle" transform="translate(11.5 405.00) rotate(-90)">7</text><rect x="8.3" y="411.88" width="1" height="1" fill="#808080"/><rect x="7" y="419.25" width="3.5" height="1" fill="#808080"/><rect x="8.3" y="426.62" width="1" height="1" fill="#808080"/><text x="0" y="0" font-size="8" fill="#505050" text-anchor="middle" transform="translate(11.5 434.50) rotate(-90)">8</text><rect x="8.3" y="441.38" width="1" height="1" fill="#808080"/><rect x="7" y="448.75" width="3.5" height="1" fill="#808080"/><rect x="8.3" y="456.12" width="1" height="1" fill="#808080"/><text x="0" y="0" font-size="8" fill="#505050" text-anchor="middle" transform="translate(11.5 464.00) rotate(-90)">9</text><rect x="8.3" y="470.88" width="1" height="1" fill="#808080"/><rect x="7" y="478.25" width="3.5" height="1" fill="#808080"/><rect x="8.3" y="485.62" width="1" height="1" fill="#808080"/><text x="0" y="0" font-size="8" fill="#505050" text-anchor="middle" transform="translate(11.5 493.50) rotate(-90)">10</text><rect x="8.3" y="500.38" width="1" height="1" fill="#808080"/><rect x="7" y="507.75" width="3.5" height="1" fill="#808080"/><rect x="8.3" y="515.12" width="1" height="1" fill="#808080"/><text x="0" y="0" font-size="8" fill="#505050" text-anchor="middle" transform="translate(11.5 523.00) rotate(-90)">11</text><rect x="8.3" y="529.88" width="1" height="1" fill="#808080"/><rect x="7" y="537.25" width="3.5" height="1" fill="#808080"/><rect x="8.3" y="544.62" width="1" height="1" fill="#808080"/><text x="0" y="0" font-size="8" fill="#505050" text-anchor="middle" transform="translate(11.5 552.50) rotate(-90)">12</text><rect x="293" y="144" width="619" height="414" fill="#fff"/><rect x="292" y="145" width="1" height="413" fill="#d8d8d8"/><rect x="912" y="145" width="1" height="413" fill="#d8d8d8"/><text x="366.5" y="209.3" font-size="10.4" fill="#222" text-anchor="start" font-weight="normal" font-style="normal" textLength="102.8" lengthAdjust="spacingAndGlyphs" stroke="#222" stroke-width="0.15">Exercice·16c°résolu·:·¶</text><text x="550.6" y="209.4" font-size="19" fill="#d9d9d9" text-anchor="start" font-weight="normal" font-style="normal" textLength="103.2" lengthAdjust="spacingAndGlyphs">© Formettic</text><path d="M697.5 222.5h44v84.5h-44z" fill="#f1f4f7" stroke="#5281ac" stroke-width="1" /><g fill="none" stroke-width="1"><path d="M367.5 222.5H817.5V500.5H367.5Z" stroke="#c8c8c8"/><path d="M367.5 222.5H817.5V500.5H367.5Z" stroke="#4a6fb5" stroke-dasharray="3 2.5"/></g><path d="M430.5 222.5h267v38h-267z" fill="#f1f4f7" stroke="#5281ac" stroke-width="1" /><path d="M430.5 260.5h44v118.3h-44z" fill="#f1f4f7" stroke="#5281ac" stroke-width="1" /><path d="M430.5 378.8h103v29.7h-103z" fill="#f1f4f7" stroke="#5281ac" stroke-width="1" /><circle cx="563" cy="325.4" r="29.7" fill="#f1f4f8" stroke="#5281ac" stroke-width="1"/><path d="M631 307.2h100l-5 28.8h-77z" fill="#f1f4f7" stroke="#5281ac" stroke-width="1" /><path d="M430.5 413.4h103l-47.8 57.8z" fill="#f1f4f7" stroke="#5281ac" stroke-width="1" /><path d="M485.7 451.9h177.9v19.4h-177.9z" fill="rgba(220,230,240,0.45)" stroke="#5281ac" stroke-width="1" /><path d="M663.2 344.8L706.5 354.8L740 389H629.6Z" fill="#f1f4f8" stroke="none"/><path d="M629.6 389L663.2 344.8L692.2 351.4" fill="none" stroke="#e04040" stroke-width="1"/><path d="M629.6 389.5H720" fill="none" stroke="#e04040" stroke-width="1"/><path d="M692.2 351.4L706.5 354.8" fill="none" stroke="#4472c4" stroke-width="1"/><rect x="660.7" y="342.3" width="5" height="5" fill="#000"/><rect x="627.1" y="386.5" width="5" height="5" fill="#000"/><rect x="704.0" y="352.3" width="5" height="5" fill="#000"/><rect x="688.5" y="347.8" width="7" height="7" fill="#fff" stroke="#555" stroke-width="0.9"/><path d="M579.95 446.9V400" fill="none" stroke="#0f4c8a" stroke-width="4.7"/><path d="M571 413.5L579.95 398.5L589 413.5" fill="none" stroke="#0f4c8a" stroke-width="4.6" stroke-linecap="round" stroke-linejoin="miter"/><path d="M579.95 394L584 401H575.9z" fill="#0f4c8a"/><text x="464.4" y="393.6" font-size="10.4" fill="#222" text-anchor="start" font-weight="normal" font-style="normal" textLength="41" lengthAdjust="spacingAndGlyphs" stroke="#222" stroke-width="0.2">Escalier¶</text><text x="533.5" y="239.9" font-size="10.4" fill="#222" text-anchor="start" font-weight="normal" font-style="normal" textLength="64.5" lengthAdjust="spacingAndGlyphs" stroke="#222" stroke-width="0.2">Couloir·Nord¶</text><rect x="412" y="306" width="1" height="1" fill="#aabbd4"/><rect x="467" y="324" width="1" height="1" fill="#aabbd4"/><rect x="477" y="324" width="1" height="1" fill="#aabbd4"/><rect x="489" y="349" width="1" height="1" fill="#aabbd4"/><rect x="613" y="389" width="1" height="1" fill="#aabbd4"/><rect x="649" y="392" width="1" height="1" fill="#aabbd4"/><rect x="498" y="419" width="1" height="1" fill="#aabbd4"/><rect x="686" y="439" width="1" height="1" fill="#aabbd4"/><rect x="559" y="173" width="1" height="1" fill="#aabbd4"/><rect x="461" y="389" width="1" height="1" fill="#aabbd4"/><rect x="728" y="347" width="1" height="1" fill="#aabbd4"/><path d="M710.5 446.5A8 8 0 0 0 710.5 457.5" fill="none" stroke="#bf7a58" stroke-width="1.1"/><path d="M430.5 222.5H697.5" stroke="#47698f" stroke-width="1"/><circle cx="367.5" cy="222.9" r="3.7" fill="#fff" stroke="#858585" stroke-width="1.5"/><circle cx="592.5" cy="222.9" r="3.7" fill="#fff" stroke="#858585" stroke-width="1.5"/><circle cx="817.2" cy="222.9" r="3.7" fill="#fff" stroke="#858585" stroke-width="1.5"/><circle cx="367.5" cy="361.5" r="3.7" fill="#fff" stroke="#858585" stroke-width="1.5"/><circle cx="367.5" cy="500.9" r="3.7" fill="#fff" stroke="#858585" stroke-width="1.5"/><circle cx="592.5" cy="500.9" r="3.7" fill="#fff" stroke="#858585" stroke-width="1.5"/><text x="366.8" y="522.5" font-size="10.5" fill="#262626" text-anchor="start" font-weight="bold" font-style="normal">¶</text><rect x="710.5" y="302.5" width="159.5" height="42.5" rx="3.5" fill="#fff" stroke="#dcdcdc" filter="url(#ds)"/><rect x="713.5" y="305.5" width="47.7" height="17.7" fill="#fff" stroke="#d2d0ce"/><rect x="761.2" y="305.5" width="36.3" height="17.7" fill="#fff" stroke="#d2d0ce"/><text x="715" y="317.5" font-size="10.3" fill="#444" text-anchor="start" font-weight="normal" font-style="normal" textLength="36" lengthAdjust="spacingAndGlyphs">Calibri (C</text><path d="M755 313.5l2 2l2 -2" fill="none" stroke="#333" stroke-width="1.1"/><text x="764" y="317.5" font-size="10.3" fill="#333" text-anchor="start" font-weight="normal" font-style="normal" textLength="9" lengthAdjust="spacingAndGlyphs">11</text><path d="M790 313.5l2 2l2 -2" fill="none" stroke="#333" stroke-width="1.1"/><text x="801" y="319" font-size="13" fill="#8a8886" text-anchor="start" font-weight="normal" font-style="normal" textLength="9" lengthAdjust="spacingAndGlyphs">A</text><path d="M809.5 311l1.5-1.7l1.5 1.7" fill="none" stroke="#8a8886" stroke-width="0.8"/><text x="819.5" y="319" font-size="11" fill="#8a8886" text-anchor="start" font-weight="normal" font-style="normal" textLength="7.5" lengthAdjust="spacingAndGlyphs">A</text><path d="M826.5 309.5l1.4 1.6l1.4-1.6" fill="none" stroke="#8a8886" stroke-width="0.8"/><rect x="835.5" y="308.5" width="11.5" height="1.3" fill="#6a6a6a"/><rect x="841.0" y="312.5" width="6" height="1.2" fill="#6a6a6a"/><rect x="841.0" y="315" width="6" height="1.2" fill="#6a6a6a"/><rect x="835.5" y="318.5" width="11.5" height="1.3" fill="#6a6a6a"/><rect x="853" y="308.5" width="11.5" height="1.3" fill="#6a6a6a"/><rect x="858.5" y="312.5" width="6" height="1.2" fill="#6a6a6a"/><rect x="858.5" y="315" width="6" height="1.2" fill="#6a6a6a"/><rect x="853" y="318.5" width="11.5" height="1.3" fill="#6a6a6a"/><path d="M836 313.8l2.5-2.2v4.4z M838 313.2h2.5v1.2h-2.5z" fill="#1e90d8"/><path d="M857.5 313.8l-2.5-2.2v4.4z M853 313.2h2.5v1.2h-2.5z" fill="#1e90d8"/><text x="718" y="336" font-size="10.5" fill="#8f8d8b" text-anchor="start" font-weight="bold" font-style="normal" textLength="6.5" lengthAdjust="spacingAndGlyphs" stroke="#8f8d8b" stroke-width="0.3">G</text><text x="737" y="336" font-size="10.5" fill="#a19f9d" text-anchor="start" font-weight="normal" font-style="italic" textLength="4" lengthAdjust="spacingAndGlyphs">I</text><text x="754" y="336" font-size="10" fill="#a19f9d" text-anchor="start" font-weight="normal" font-style="normal" textLength="5.8" lengthAdjust="spacingAndGlyphs">S</text><rect x="753.5" y="337.8" width="6.5" height="1.2" fill="#aeacaa"/><rect x="769" y="327.5" width="11" height="1.2" fill="#a8a6a4"/><rect x="769" y="330.7" width="8" height="1.2" fill="#a8a6a4"/><rect x="769" y="333.9" width="11" height="1.2" fill="#a8a6a4"/><rect x="769" y="337.1" width="8" height="1.2" fill="#a8a6a4"/><rect x="786" y="327.5" width="11" height="1.2" fill="#a8a6a4"/><rect x="787.5" y="330.7" width="8" height="1.2" fill="#a8a6a4"/><rect x="786" y="333.9" width="11" height="1.2" fill="#a8a6a4"/><rect x="787.5" y="337.1" width="8" height="1.2" fill="#a8a6a4"/><rect x="804" y="327.5" width="11" height="1.2" fill="#a8a6a4"/><rect x="807" y="330.7" width="8" height="1.2" fill="#a8a6a4"/><rect x="804" y="333.9" width="11" height="1.2" fill="#a8a6a4"/><rect x="807" y="337.1" width="8" height="1.2" fill="#a8a6a4"/><text x="821.3" y="334.3" font-size="11.5" fill="#444" text-anchor="start" font-weight="normal" font-style="normal" textLength="11.5" lengthAdjust="spacingAndGlyphs">A</text><rect x="820.5" y="336.2" width="12.5" height="2.8" fill="#e81123"/><path d="M838.7 331.1l1.8 1.8l1.8 -1.8" fill="none" stroke="#444" stroke-width="1.1"/><g transform="translate(809 233)"><path d="M41.3 99.3L46.3 96.6L50.8 101.1L46.6 105Z" fill="#fff" stroke="#e8801a" stroke-width="1.1" stroke-linejoin="round"/><path d="M43.2 101.2L49.6 102.2L46.6 105Z" fill="#f09030"/><path d="M45.6 96.8L48.6 94L52.6 98L49.8 101Z" fill="#5a5a5a"/><path d="M50 96.2L53.6 92.8" stroke="#5a5a5a" stroke-width="2" stroke-linecap="round"/></g><rect x="710.5" y="357.5" width="149" height="185.8" rx="3.5" fill="#fff" stroke="#d9d9d9" filter="url(#ds)"/><text x="739.7" y="373.29999999999995" font-size="10.5" fill="#262626" text-anchor="start" font-weight="normal" font-style="normal" textLength="67.3" lengthAdjust="spacingAndGlyphs">Ajouter un point</text><rect x="739.7" y="373.7" width="5.7999999999999545" height="0.9" fill="#262626"/><text x="739.7" y="395.9" font-size="10.5" fill="#262626" text-anchor="start" font-weight="normal" font-style="normal" textLength="77" lengthAdjust="spacingAndGlyphs">Supprimer le point</text><rect x="745" y="396.3" width="4.5" height="0.9" fill="#262626"/><text x="739.7" y="418.4" font-size="10.5" fill="#262626" text-anchor="start" font-weight="normal" font-style="normal" textLength="79.5" lengthAdjust="spacingAndGlyphs">Ouvrir la trajectoire</text><rect x="0" y="418.8" width="0" height="0.9" fill="#262626"/><text x="739.7" y="440.5" font-size="10.5" fill="#a19f9d" text-anchor="start" font-weight="normal" font-style="normal" textLength="83.4" lengthAdjust="spacingAndGlyphs">Fermer la trajectoire</text><rect x="739.7" y="440.90000000000003" width="4.7999999999999545" height="0.9" fill="#a19f9d"/><text x="739.7" y="465.4" font-size="10.5" fill="#262626" text-anchor="start" font-weight="normal" font-style="normal" textLength="40.5" lengthAdjust="spacingAndGlyphs">Point lisse</text><rect x="762.8" y="465.8" width="1.7000000000000455" height="0.9" fill="#262626"/><text x="739.7" y="488.0" font-size="10.5" fill="#262626" text-anchor="start" font-weight="normal" font-style="normal" textLength="54" lengthAdjust="spacingAndGlyphs">Point continu</text><rect x="739.7" y="488.40000000000003" width="5.599999999999909" height="0.9" fill="#262626"/><text x="739.7" y="510.0" font-size="10.5" fill="#262626" text-anchor="start" font-weight="normal" font-style="normal" textLength="53.6" lengthAdjust="spacingAndGlyphs">Point d'angle</text><rect x="752.5" y="510.40000000000003" width="4.5" height="0.9" fill="#262626"/><text x="739.7" y="534.6999999999999" font-size="10.5" fill="#262626" text-anchor="start" font-weight="normal" font-style="normal" textLength="101" lengthAdjust="spacingAndGlyphs">Quitter Modifier le point</text><rect x="770.7" y="535.0999999999999" width="7.7999999999999545" height="0.9" fill="#262626"/><rect x="736" y="449" width="123" height="1" fill="#e1dfdd"/><rect x="736" y="518.3" width="123" height="1" fill="#e1dfdd"/><path d="M722.8 505l2.3 2.6l4.4-4.8" fill="none" stroke="#444" stroke-width="1.1"/>
</svg>
</body></html>
